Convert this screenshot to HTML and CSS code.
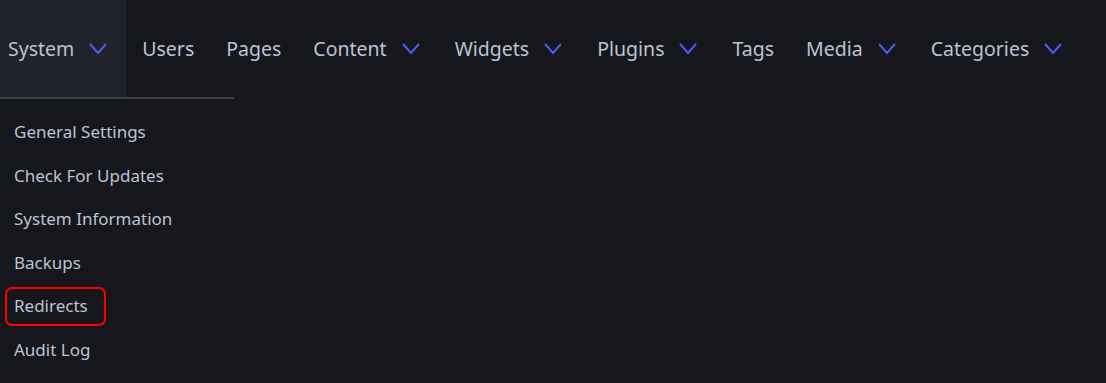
FILE: index.html
```html
<!DOCTYPE html>
<html lang="en">
<head>
    <meta charset="UTF-8">
    <title>Admin Menu</title>
    <link rel="stylesheet" href="styles.css">
</head>
<body>
    <nav class="menu">
        <div class="menu-item open">
            <span>System</span>
            <svg class="chevron" viewBox="0 0 24 12"><path d="M4 1 L12 10 L20 1"/></svg>
            <ul class="dropdown">
                <li>General Settings</li>
                <li>Check For Updates</li>
                <li>System Information</li>
                <li>Backups</li>
                <li class="marked">Redirects</li>
                <li>Audit Log</li>
            </ul>
        </div>
        <div class="menu-item"><span>Users</span></div>
        <div class="menu-item"><span>Pages</span></div>
        <div class="menu-item">
            <span>Content</span>
            <svg class="chevron" viewBox="0 0 24 12"><path d="M4 1 L12 10 L20 1"/></svg>
        </div>
        <div class="menu-item">
            <span>Widgets</span>
            <svg class="chevron" viewBox="0 0 24 12"><path d="M4 1 L12 10 L20 1"/></svg>
        </div>
        <div class="menu-item">
            <span>Plugins</span>
            <svg class="chevron" viewBox="0 0 24 12"><path d="M4 1 L12 10 L20 1"/></svg>
        </div>
        <div class="menu-item"><span>Tags</span></div>
        <div class="menu-item">
            <span>Media</span>
            <svg class="chevron" viewBox="0 0 24 12"><path d="M4 1 L12 10 L20 1"/></svg>
        </div>
        <div class="menu-item">
            <span>Categories</span>
            <svg class="chevron" viewBox="0 0 24 12"><path d="M4 1 L12 10 L20 1"/></svg>
        </div>
    </nav>
</body>
</html>
```

FILE: styles.css
```css
* {
    box-sizing: border-box;
    margin: 0;
    padding: 0;
}

body {
    background: #16171c;
    color: #bcc3d6;
    font-family: "Segoe UI", "Noto Sans", sans-serif;
    height: 100vh;
    overflow: hidden;
}

.menu {
    display: flex;
    height: 97px;
}

.menu-item {
    position: relative;
    display: flex;
    align-items: center;
    gap: 12px;
    padding: 0 16px;
    font-size: 19.5px;
}

.menu-item:first-child {
    padding-left: 8px;
    padding-right: 16px;
}

.menu-item.open {
    background: #20232b;
}

.chevron {
    width: 24px;
    height: 12px;
    fill: none;
    stroke: #4a5df2;
    stroke-width: 2;
}

.dropdown {
    position: absolute;
    top: 97px;
    left: 0;
    width: 234px;
    border-top: 2px solid #3b3f48;
    list-style: none;
    padding-top: 11px;
}

.dropdown li {
    font-size: 17px;
    height: 43.6px;
    line-height: 43.6px;
    padding-left: 14px;
}

.dropdown li.marked {
    position: relative;
}

.dropdown li.marked::after {
    content: "";
    position: absolute;
    left: 5px;
    top: 3px;
    width: 97px;
    height: 35px;
    border: 2.5px solid #ff0000;
    border-radius: 7px;
}
```
